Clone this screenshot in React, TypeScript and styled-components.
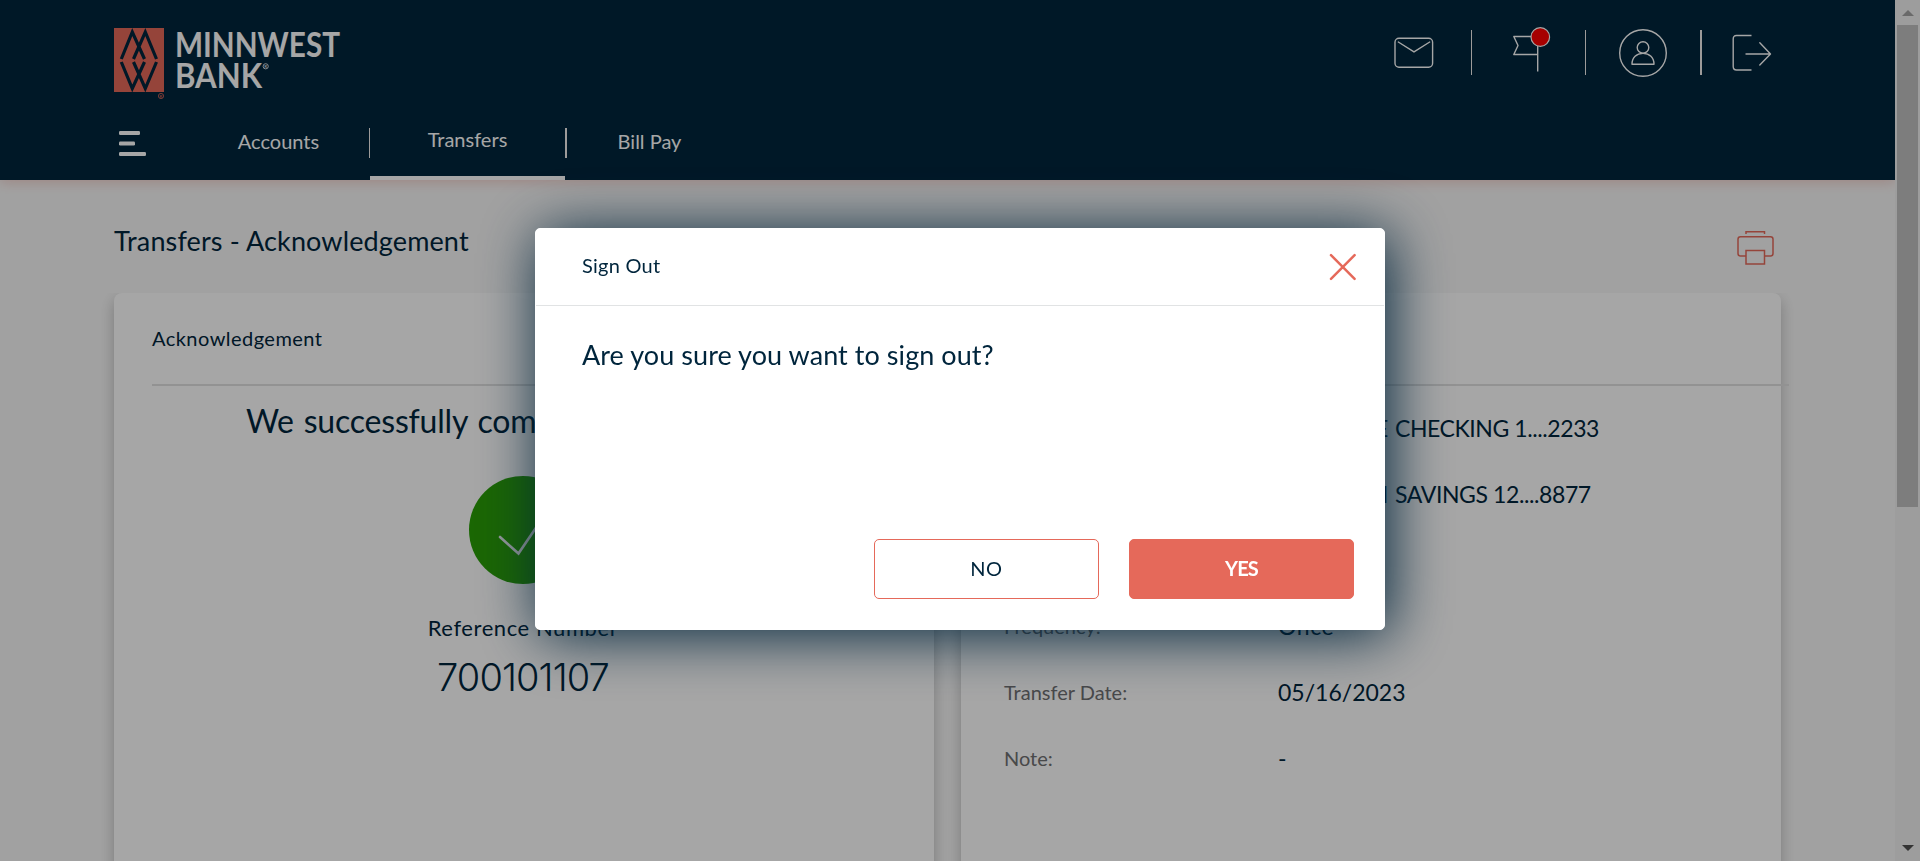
import React from 'react';
import styled, { createGlobalStyle } from 'styled-components';

const NAVY = '#00253c';
const CORAL = '#e5695a';

const GlobalStyle = createGlobalStyle`
  * { box-sizing: border-box; }
  html, body { margin: 0; padding: 0; }
  body { font-family: Lato, 'Liberation Sans', sans-serif; color: ${NAVY}; overflow: hidden; }
  h1, h2, p, dl, dt, dd { margin: 0; font-weight: 400; }
  button { font-family: inherit; padding: 0; cursor: pointer; }
  svg { display: block; overflow: visible; }
`;

const Window = styled.div`
  display: flex;
  height: 861px;
  overflow: hidden;
`;

const Page = styled.div`
  flex: 1;
  display: flex;
  flex-direction: column;
  background: #f8f8f8;
`;

/* ---------- header ---------- */

const Header = styled.header`
  flex: none;
  height: 180px;
  padding-left: 114px;
  display: flex;
  flex-direction: column;
  background: ${NAVY};
  color: #fff;
  box-shadow: 0 2px 12px rgba(229, 105, 90, 0.3);
`;

const Masthead = styled.div`
  display: flex;
  height: 128px;
  padding-right: 94px;
  align-items: flex-start;
  justify-content: space-between;
`;

const LogoBox = styled.div`
  padding-top: 28px;
`;

const Tools = styled.div`
  display: flex;
  align-items: center;
  padding-top: 22px;
  height: 83px;
`;

const ToolSlot = styled.button<{ $w: number; $nudge?: boolean }>`
  display: flex;
  justify-content: center;
  width: ${(p) => p.$w}px;
  padding: ${(p) => (p.$nudge ? '0 0 7px 7px' : 0)};
  border: 0;
  background: none;
`;

const Divider = styled.span<{ $w?: number; $h: number }>`
  flex: none;
  width: ${(p) => p.$w ?? 1}px;
  height: ${(p) => p.$h}px;
  background: #f1efed;
`;

const Nav = styled.nav`
  display: flex;
  height: 52px;
  align-items: flex-start;
`;

const MenuButton = styled.button`
  width: 74px;
  padding: 3px 0 0 5px;
  border: 0;
  background: none;
`;

const NavItem = styled.a<{ $w: number; $active?: boolean }>`
  width: ${(p) => p.$w}px;
  height: 52px;
  padding-top: ${(p) => (p.$active ? 0 : 2)}px;
  border-bottom: ${(p) => (p.$active ? '4px solid #fff' : '0')};
  font-size: 20px;
  line-height: ${(p) => (p.$active ? 23 : 22)}px;
  text-align: center;
`;

/* ---------- body ---------- */

const Content = styled.main`
  flex: 1;
  display: flex;
  flex-direction: column;
  width: 1781px;
  padding-left: 114px;
`;

const TitleBar = styled.div`
  display: flex;
  justify-content: space-between;
  height: 113px;
  padding: 45px 7px 0 0;
`;

const Title = styled.h1`
  font-size: 27px;
  line-height: 32px;
  letter-spacing: 0.13px;
`;

const PrintButton = styled.button`
  height: 36px;
  margin-top: 5px;
  border: 0;
  background: none;
`;

const Cards = styled.div`
  flex: 1;
  display: flex;
  gap: 27px;
`;

const Card = styled.section`
  width: 820px;
  height: 640px;
  border-radius: 8px 8px 0 0;
  background: #fff;
  box-shadow: 0 6px 15px rgba(0, 0, 0, 0.24);
  clip-path: inset(0 -20px -20px -20px);
`;

const CardHead = styled.div`
  height: 93px;
  margin: 0 -8px 0 38px;
  border-bottom: 2px solid #e0e0e0;
  padding-top: 33px;
  font-size: 20px;
  line-height: 24px;
  letter-spacing: 0.46px;
`;

const Result = styled.div`
  display: flex;
  flex-direction: column;
  align-items: center;
  margin-right: 2px;
`;

const ResultText = styled.p`
  margin-top: 15px;
  padding-left: 13px;
  font-size: 32px;
  line-height: 40px;
  letter-spacing: -0.2px;
  word-spacing: 2px;
  white-space: nowrap;
`;

const Check = styled.div`
  display: flex;
  align-items: center;
  justify-content: center;
  width: 108px;
  height: 108px;
  margin-top: 35px;
  border-radius: 50%;
  background: #299e06;
`;

const RefLabel = styled.p`
  margin-top: 31px;
  font-size: 22px;
  line-height: 26px;
  letter-spacing: 0.57px;
`;

const RefNumber = styled.p`
  margin-top: 14px;
  font-family: Inter, sans-serif;
  font-size: 38px;
  font-weight: 300;
  line-height: 44px;
  letter-spacing: -0.9px;
`;

const Details = styled.dl`
  display: flex;
  flex-direction: column;
  margin-left: 43px;
  padding-top: 9px;
`;

const DetailRow = styled.div`
  display: flex;
  align-items: center;
  height: 66px;
`;

const DetailLabel = styled.dt`
  width: 274px;
  font-size: 20px;
  line-height: 24px;
  color: #6f7072;
`;

const DetailValue = styled.dd<{ $spacing?: number }>`
  display: flex;
  font-size: 23px;
  line-height: 28px;
  letter-spacing: ${(p) => p.$spacing ?? 0}px;
  white-space: pre;
`;

const AccountPrefix = styled.span`
  width: 110px;
  margin-right: 7px;
  text-align: right;
`;

/* ---------- scrollbar ---------- */

const ScrollTrack = styled.div`
  display: flex;
  flex-direction: column;
  align-items: center;
  width: 25px;
  padding: 10px 0;
  background: #f1f1f1;
`;

const ScrollThumb = styled.div`
  width: 21px;
  height: 482px;
  margin: 9px 0 auto;
  background: #c1c1c1;
`;

/* ---------- dialog ---------- */

const Overlay = styled.div`
  position: fixed;
  inset: 0;
  display: flex;
  align-items: flex-start;
  justify-content: center;
  padding-top: 228px;
  background: rgba(0, 0, 0, 0.35);
`;

const Dialog = styled.div`
  display: flex;
  flex-direction: column;
  width: 850px;
  height: 402px;
  border: 1px solid #fff;
  border-radius: 5px;
  background: #fff;
  box-shadow: 5px 5px 60px ${NAVY};
`;

const DialogHead = styled.div`
  display: flex;
  justify-content: space-between;
  height: 77px;
  padding: 25px 28px 0 46px;
  border-bottom: 1px solid #e1e3e4;
`;

const DialogTitle = styled.h2`
  margin-top: -1px;
  font-size: 20px;
  line-height: 24px;
  letter-spacing: 0.25px;
`;

const CloseButton = styled.button`
  height: 27px;
  border: 0;
  background: none;
`;

const Question = styled.p`
  flex: 1;
  padding: 33px 46px;
  font-size: 27px;
  line-height: 32px;
  letter-spacing: 0.06px;
`;

const Actions = styled.div`
  display: flex;
  justify-content: flex-end;
  gap: 30px;
  padding: 0 30px 30px;
`;

const ActionButton = styled.button<{ $primary?: boolean }>`
  width: 225px;
  height: 60px;
  padding-bottom: 2px;
  border: 1px solid ${CORAL};
  border-radius: 5px;
  background: ${(p) => (p.$primary ? CORAL : '#fff')};
  color: ${(p) => (p.$primary ? '#fff' : NAVY)};
  font-size: 20px;
  font-weight: ${(p) => (p.$primary ? 700 : 400)};
  letter-spacing: ${(p) => (p.$primary ? -0.8 : 0.6)}px;
`;

/* ---------- drawings ---------- */

const Logo = () => (
  <svg width="230" height="72" viewBox="0 0 230 72">
    <rect width="50" height="64" fill={CORAL} />
    <g stroke={NAVY} strokeWidth="3.2" fill="none">
      <path d="M7.3 31L18.3 4L30.5 31M19.5 31L31.3 4L42.5 31" />
      <path d="M7.3 34L18.3 60.5L30.5 34M19.5 34L31.3 60.5L42.5 34" />
    </g>
    <circle cx="47" cy="68" r="2.6" fill="none" stroke={CORAL} strokeWidth="0.8" />
    <text x="47" y="69.7" fontSize="4.5" fill={CORAL} textAnchor="middle">R</text>
    <g fill="#fff" fontWeight="700" fontSize="33.5">
      <text x="61" y="28.8" textLength="165" lengthAdjust="spacingAndGlyphs">MINNWEST</text>
      <text x="61" y="60.3" textLength="87" lengthAdjust="spacingAndGlyphs">BANK</text>
    </g>
    <circle cx="151.7" cy="38.3" r="2.6" fill="none" stroke="#fff" strokeWidth="0.8" />
    <text x="151.7" y="40" fontSize="4.5" fill="#fff" textAnchor="middle">R</text>
  </svg>
);

const MailIcon = () => (
  <svg width="40" height="32" viewBox="0 0 40 32" fill="none" stroke="#fff" strokeWidth="1.4">
    <rect x="1" y="1.2" width="37.6" height="29" rx="4" />
    <path d="M4.3 5L20 14.8L35.7 5" strokeLinecap="round" />
  </svg>
);

const FlagIcon = () => (
  <svg width="40" height="48" viewBox="0 0 40 48" fill="none" stroke="#fff" strokeWidth="1.4">
    <path d="M25.7 46.5V11.5H1.8L6 20.5L1.8 29.5H25.7" strokeLinejoin="round" />
    <circle cx="28.3" cy="12" r="9.3" fill="#ff0000" strokeWidth="1.2" />
  </svg>
);

const PersonIcon = () => (
  <svg width="50" height="50" viewBox="0 0 50 50" fill="none" stroke="#fff" strokeWidth="1.4">
    <circle cx="25" cy="25" r="23.3" />
    <circle cx="25" cy="19.5" r="5.8" />
    <path d="M14 36.2C14 29.5 18.5 25.4 25 25.4S36 29.5 36 36.2Z" strokeLinejoin="round" />
  </svg>
);

const SignOutIcon = () => (
  <svg width="40" height="38" viewBox="0 0 40 38" fill="none" stroke="#fff" strokeWidth="1.4">
    <path d="M19.5 1.5H4.5Q1.2 1.5 1.2 5V32.5Q1.2 36 4.5 36H19.5" />
    <path d="M14 20H38M27.8 8.8L38.5 20L27.8 31" strokeLinecap="round" strokeLinejoin="round" />
  </svg>
);

const MenuIcon = () => (
  <svg width="28" height="26" viewBox="0 0 28 26" fill="#fff">
    <rect width="21" height="4" rx="1.2" />
    <rect y="10.5" width="16" height="4" rx="1.2" />
    <rect y="21" width="27" height="4" rx="1.2" />
  </svg>
);

const PrinterIcon = () => (
  <svg width="37" height="36" viewBox="0 0 37 36" fill="none" stroke={CORAL} strokeWidth="1.5">
    <path d="M9 4V1.8H27.5V4" />
    <path d="M9 26H3.5Q1 26 1 23.5V9.3Q1 6.8 3.5 6.8H33.5Q36 6.8 36 9.3V23.5Q36 26 33.5 26H27.5" />
    <rect x="9" y="20.5" width="18.5" height="13.5" />
  </svg>
);

const CheckIcon = () => (
  <svg width="108" height="108" viewBox="0 0 108 108" fill="none" stroke="#e8edf0" strokeWidth="2.6">
    <path d="M31 61L49.5 77.5L77 37" strokeLinecap="round" />
  </svg>
);

const CloseIcon = () => (
  <svg width="27" height="27" viewBox="0 0 27 27" stroke={CORAL} strokeWidth="2.5" strokeLinecap="round">
    <path d="M2 1.2L25.6 24.8M25.6 1.2L2 24.8" />
  </svg>
);

const Arrow = ({ down }: { down?: boolean }) => (
  <svg width="12" height="6" viewBox="0 0 12 6" fill={down ? '#505050' : '#a3a3a3'}>
    <path d={down ? 'M0 0H12L6 6Z' : 'M0 6H12L6 0Z'} />
  </svg>
);

export default function App() {
  return (
    <>
      <GlobalStyle />
      <Window>
        <Page>
          <Header>
            <Masthead>
              <LogoBox><Logo /></LogoBox>
              <Tools>
                <ToolSlot $w={115}><MailIcon /></ToolSlot>
                <Divider $h={45} />
                <ToolSlot $w={113} $nudge><FlagIcon /></ToolSlot>
                <Divider $h={45} />
                <ToolSlot $w={114}><PersonIcon /></ToolSlot>
                <Divider $w={2} $h={45} />
                <ToolSlot $w={99}><SignOutIcon /></ToolSlot>
              </Tools>
            </Masthead>
            <Nav>
              <MenuButton aria-label="Menu"><MenuIcon /></MenuButton>
              <NavItem $w={181}>Accounts</NavItem>
              <Divider $h={30} />
              <NavItem $w={195} $active>Transfers</NavItem>
              <Divider $w={2} $h={30} />
              <NavItem $w={165}>Bill Pay</NavItem>
            </Nav>
          </Header>
          <Content>
            <TitleBar>
              <Title>Transfers - Acknowledgement</Title>
              <PrintButton aria-label="Print"><PrinterIcon /></PrintButton>
            </TitleBar>
            <Cards>
              <Card>
                <CardHead>Acknowledgement</CardHead>
                <Result>
                  <ResultText>We successfully completed your transfer</ResultText>
                  <Check><CheckIcon /></Check>
                  <RefLabel>Reference Number</RefLabel>
                  <RefNumber>700101107</RefNumber>
                </Result>
              </Card>
              <Card>
                <CardHead />
                <Details>
                  <DetailRow>
                    <DetailLabel>From:</DetailLabel>
                    <DetailValue $spacing={-0.42}><AccountPrefix>SIMPLE</AccountPrefix>CHECKING 1....2233</DetailValue>
                  </DetailRow>
                  <DetailRow>
                    <DetailLabel>To:</DetailLabel>
                    <DetailValue $spacing={-0.4}><AccountPrefix>HEALTH</AccountPrefix>SAVINGS 12....8877</DetailValue>
                  </DetailRow>
                  <DetailRow>
                    <DetailLabel>Amount:</DetailLabel>
                    <DetailValue>$1.00</DetailValue>
                  </DetailRow>
                  <DetailRow>
                    <DetailLabel>Frequency:</DetailLabel>
                    <DetailValue $spacing={0.6}>Once</DetailValue>
                  </DetailRow>
                  <DetailRow>
                    <DetailLabel>Transfer Date:</DetailLabel>
                    <DetailValue>05/16/2023</DetailValue>
                  </DetailRow>
                  <DetailRow>
                    <DetailLabel>Note:</DetailLabel>
                    <DetailValue>-</DetailValue>
                  </DetailRow>
                </Details>
              </Card>
            </Cards>
          </Content>
        </Page>
        <ScrollTrack>
          <Arrow />
          <ScrollThumb />
          <Arrow down />
        </ScrollTrack>
      </Window>
      <Overlay>
        <Dialog role="dialog">
          <DialogHead>
            <DialogTitle>Sign Out</DialogTitle>
            <CloseButton aria-label="Close"><CloseIcon /></CloseButton>
          </DialogHead>
          <Question>Are you sure you want to sign out?</Question>
          <Actions>
            <ActionButton>NO</ActionButton>
            <ActionButton $primary>YES</ActionButton>
          </Actions>
        </Dialog>
      </Overlay>
    </>
  );
}
